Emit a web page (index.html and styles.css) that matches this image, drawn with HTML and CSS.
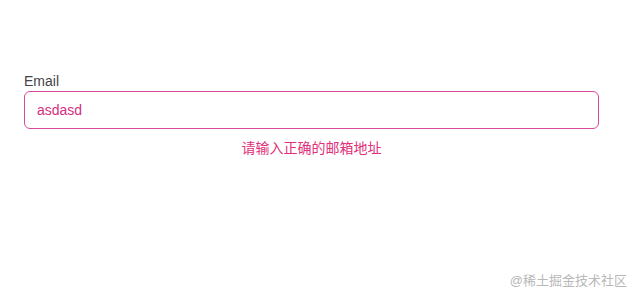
FILE: index.html
```html
<!DOCTYPE html>
<html lang="zh">
<head>
<meta charset="utf-8">
<link rel="stylesheet" href="styles.css">
</head>
<body>
<main class="page">
  <div class="field">
    <label class="label" for="email">Email</label>
    <div class="input">asdasd</div>
    <div class="error">请输入正确的邮箱地址</div>
  </div>
</main>
<div class="watermark">@稀土掘金技术社区</div>
</body>
</html>
```
FILE: styles.css
```css
html, body {
  margin: 0;
  padding: 0;
  background: #fff;
}
body {
  width: 639px;
  height: 300px;
  position: relative;
  overflow: hidden;
  font-family: "Liberation Sans", Arial, "Noto Sans CJK SC", sans-serif;
}
.page {
  padding: 73px 0 0 24px;
}
.field {
  width: 575px;
  display: flex;
  flex-direction: column;
}
.label {
  font-size: 14px;
  line-height: 16px;
  color: #444;
  margin-bottom: 2px;
}
.input {
  box-sizing: border-box;
  height: 38px;
  border: 1px solid #d9489b;
  border-radius: 6px;
  padding: 0 12px;
  display: flex;
  align-items: center;
  font-size: 14px;
  color: #d42f7f;
}
.error {
  margin-top: 8px;
  text-align: center;
  font-size: 14px;
  line-height: 20px;
  color: #e0307a;
  font-family: "Noto Sans CJK SC", sans-serif;
}
.watermark {
  position: absolute;
  right: 12px;
  bottom: 9px;
  font-size: 13px;
  line-height: 20px;
  color: #b8b8b8;
  font-family: "Liberation Sans", "Noto Sans CJK SC", sans-serif;
}
```
